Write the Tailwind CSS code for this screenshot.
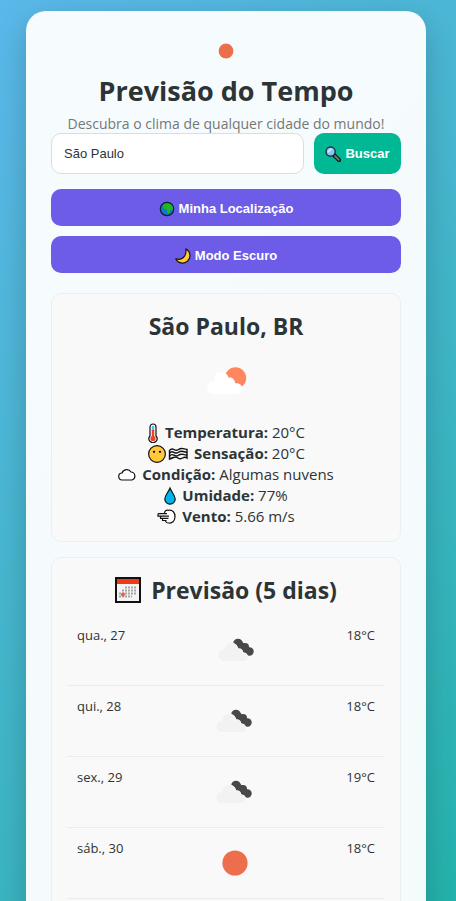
<!DOCTYPE html>
<html lang="pt-BR">
<head>
<meta charset="UTF-8">
<meta name="viewport" content="width=device-width, initial-scale=1">
<title>Previsão do Tempo</title>
<script src="https://cdn.jsdelivr.net/npm/@tailwindcss/browser@4"></script>
</head>
<body class="min-h-screen bg-linear-135 from-[#5bb8ea] to-[#20b2aa] pt-[11px] pr-1 pb-3 font-['Open_Sans','Noto_Sans',sans-serif] text-[#2d3436]">
<svg class="hidden" aria-hidden="true">
  <symbol id="clouds" viewBox="0 0 50 50">
    <g fill="#484848"><circle cx="27" cy="18.500" r="4.800"/><circle cx="34" cy="22" r="4"/><circle cx="38.500" cy="26.500" r="4.200"/><path d="M24 21l6-5 11 9-5 5z"/></g>
    <g fill="#f2f2f2" stroke="#f9f9f9" stroke-width="1.200"><circle cx="20" cy="25" r="7"/><circle cx="28" cy="27.500" r="3.600"/><circle cx="32.500" cy="32" r="4"/></g>
    <g fill="#f2f2f2"><circle cx="13" cy="30.500" r="5.500"/><circle cx="20" cy="25" r="7"/><circle cx="28" cy="27.500" r="3.600"/><circle cx="32.500" cy="32" r="4"/><path d="M13 25h14l5 6v5H13z"/></g>
  </symbol>
  <symbol id="sun" viewBox="0 0 50 50"><circle cx="25" cy="25" r="12.600" fill="#ec6e4c"/></symbol>
</svg>
<main class="mx-auto max-w-[400px] rounded-[20px] bg-white/95 p-[25px] shadow-[0_10px_30px_rgba(0,0,0,0.2)]">
  <header class="flex flex-col items-center text-center">
    <svg class="size-[30px]" viewBox="0 0 30 30" aria-hidden="true"><circle cx="15" cy="15" r="7.400" fill="#ec6e4c"/></svg>
    <h1 class="mt-1 text-[27px] leading-[42px] font-bold">Previsão do Tempo</h1>
    <p class="mt-[3px] text-[14px] leading-[18px] text-[#747778]">Descubra o clima de qualquer cidade do mundo!</p>
  </header>
  <form class="flex gap-[10px]" onsubmit="return false">
    <input type="text" aria-label="Cidade" value="São Paulo" class="h-[41px] min-w-0 flex-1 rounded-[10px] border border-[#dddddd] bg-white px-3 font-['Liberation_Sans',Arial,sans-serif] text-[13px]">
    <button type="submit" class="flex w-[87px] items-center justify-center gap-1 rounded-[10px] bg-[#00b894] font-['Liberation_Sans',Arial,sans-serif] text-[13px] font-bold text-white">
      <svg class="size-4" viewBox="0 0 16 16" aria-hidden="true"><path d="M8.700 8.800 14 14" stroke="#111" stroke-width="4" stroke-linecap="round"/><path d="m10 10 3.800 3.800" stroke="#777" stroke-width="1.800" stroke-linecap="round"/><circle cx="5.600" cy="5.600" r="4.600" fill="#8cc4f5" stroke="#172b38" stroke-width="1.300"/><path d="M3 6.200 6.500 2.700" stroke="#d3eaff" stroke-width="1.800"/></svg>
      Buscar
    </button>
  </form>
  <div class="mt-[15px] flex flex-col gap-[10px] font-['Liberation_Sans',Arial,sans-serif] text-[13px] font-bold text-white">
    <button type="button" class="flex h-[37px] items-center justify-center gap-1 rounded-[10px] bg-[#6c5ce7] pt-[2px]">
      <svg class="size-4" viewBox="0 0 16 16" aria-hidden="true"><circle cx="8" cy="8" r="6.700" fill="#0f78d2" stroke="#101b25" stroke-width="1.200"/><path fill="#20b818" d="M3.800 4.500C5 2.500 9 1.500 11.800 3.300c2 1.700 2.600 4 1.800 6L11.500 8.500c-.6 2-1 4-2.200 4.300-1-.5-1-2.500-1.500-4.300-2 .4-4-1.500-4-4z"/></svg>
      Minha Localização
    </button>
    <button type="button" class="flex h-[37px] items-center justify-center gap-1 rounded-[10px] bg-[#6c5ce7] pt-[2px]">
      <svg class="size-4" viewBox="0 0 16 16" aria-hidden="true"><path d="M10.800.8c5 3 5.500 9 1.600 12.400-4 3.300-9.600 2-11.600-2.300 4 1 7-.1 8.700-2.700 1.500-2.300 1.700-4.500 1.300-7.400z" fill="#ffc83d" stroke="#20180b" stroke-width="1.200" stroke-linejoin="round"/></svg>
      Modo Escuro
    </button>
  </div>

  <section class="mt-5 flex flex-col items-center rounded-[10px] border border-[#ecefef] bg-[#f9f9f9] px-[15px] py-[14px]">
    <h2 class="text-[23px] leading-9 font-bold">São Paulo, BR</h2>
    <svg class="my-[6px] h-[66px] w-[66px]" viewBox="0 0 66 65" role="img" aria-label="Algumas nuvens"><circle cx="42.500" cy="27.500" r="10.700" fill="#ff875f"/><path fill="#fff" d="M20 43.500a6.300 6.300 0 0 1-.8-12.500q.8-.5 1.800-.5c0-6 3.200-9 7.500-9 3.500 0 6 1.800 7.200 5.700 3.500-.5 6 1.500 6.500 5.500 4.500-.2 7 1.800 7.300 5.800-.2 3-1.500 5-4.500 5z"/></svg>
    <ul class="text-center text-[15px] leading-[21px]">
      <li class="flex items-center justify-center gap-[6px]">
        <svg class="h-5 w-3" viewBox="0 0 12 20" aria-hidden="true"><path d="M3 4a3 3 0 0 1 6 0v9a4 4 0 1 1-6 0z" fill="#fff" stroke="#111" stroke-width="1.200"/><path d="M6 3v5" stroke="#45c5f5" stroke-width="2.500"/><path d="M6 7v8" stroke="#ef4128" stroke-width="2.500"/><circle cx="6" cy="15.500" r="2.600" fill="#ef4128"/></svg>
        <span><strong>Temperatura:</strong> 20°C</span>
      </li>
      <li class="flex items-center justify-center gap-[6px]">
        <svg class="h-5 w-[41px]" viewBox="0 0 41 20" aria-hidden="true"><circle cx="10" cy="10" r="8.400" fill="#ffc83d" stroke="#111" stroke-width="1.200"/><circle cx="7" cy="7.800" r="1.100"/><circle cx="13" cy="7.800" r="1.100"/><g fill="none" stroke="#111" stroke-width="1.400"><path d="M22.500 6.500q2-2.500 4.500-1t4.500 0 4.500-.8 4 .8v8.500q-2-1.500-4.500 0t-4.500 0-4.500-.5-4 1.500z"/><path d="M22.500 9.300q2-2.500 4.500-1t4.500 0 4.500-.8 4 .8M22.500 12.200q2-2.500 4.500-1t4.500 0 4.500-.8 4 .8"/></g></svg>
        <span><strong>Sensação:</strong> 20°C</span>
      </li>
      <li class="flex items-center justify-center gap-[6px]">
        <svg class="h-5 w-[18px]" viewBox="0 0 18 20" aria-hidden="true"><path d="M4.500 15a3.500 3.500 0 0 1-.5-7 5 5 0 0 1 9-1 4.100 4.100 0 0 1 1 8z" fill="#fff" stroke="#111" stroke-width="1.200"/></svg>
        <span><strong>Condição:</strong> Algumas nuvens</span>
      </li>
      <li class="flex items-center justify-center gap-[6px]">
        <svg class="h-5 w-3" viewBox="0 0 12 20" aria-hidden="true"><path d="M6 2C4 7 .8 9.500.8 13a5.200 5.200 0 0 0 10.400 0C11.200 9.500 8 7 6 2z" fill="#00b4f0" stroke="#111" stroke-width="1.200"/></svg>
        <span><strong>Umidade:</strong> 77%</span>
      </li>
      <li class="flex items-center justify-center gap-[6px]">
        <svg class="h-5 w-[19px]" viewBox="0 0 19 20" aria-hidden="true"><path d="M7.500 6.500c-.3-2.500 2-4 4-3.200 4-.8 6.800 2.500 6.500 6.700s-3 6.500-6 6c-2 .2-3.500-1-3.500-2.500" fill="#fff" stroke="#111" stroke-width="1.200"/><path d="M1 6.700h9M1 6.700v2.400h11M3.500 9v2.300h8M5.500 11.300v2.200h4" fill="none" stroke="#111" stroke-width="1.200"/></svg>
        <span><strong>Vento:</strong> 5.66 m/s</span>
      </li>
    </ul>
  </section>

  <section class="mt-[15px] rounded-[10px] border border-[#ecefef] bg-[#f9f9f9] p-[15px]">
    <h2 class="flex items-center justify-center gap-[10px] text-[23px] leading-[34px] font-bold">
      <svg class="size-[26px]" viewBox="0 0 26 26" aria-hidden="true"><path d="M1 1h24v24H1z" fill="#f4f4f4" stroke="#111" stroke-width="2"/><path d="M2 2h22v5H2z" fill="#f03a17"/><path d="M10 10.500h12M7 13.500h15M4 16.500h18M4 19.500h13" stroke="#a5a5a5" stroke-width="2" stroke-dasharray="2 1"/><circle cx="8" cy="17.500" r="2" fill="#ef5a3d"/></svg>
      Previsão (5 dias)
    </h2>
    <ul class="mt-2 text-[13px] leading-5">
      <li class="flex justify-between border-b border-[#ececec] p-[10px]"><span>qua., 27</span><svg class="size-[50px]" role="img" aria-label="Nublado"><use href="#clouds"/></svg><span>18°C</span></li>
      <li class="flex justify-between border-b border-[#ececec] p-[10px]"><span>qui., 28</span><svg class="size-[50px]" role="img" aria-label="Nublado"><use href="#clouds"/></svg><span>18°C</span></li>
      <li class="flex justify-between border-b border-[#ececec] p-[10px]"><span>sex., 29</span><svg class="size-[50px]" role="img" aria-label="Nublado"><use href="#clouds"/></svg><span>19°C</span></li>
      <li class="flex justify-between border-b border-[#ececec] p-[10px]"><span>sáb., 30</span><svg class="size-[50px]" role="img" aria-label="Céu limpo"><use href="#sun"/></svg><span>18°C</span></li>
    </ul>
  </section>
</main>
</body>
</html>
